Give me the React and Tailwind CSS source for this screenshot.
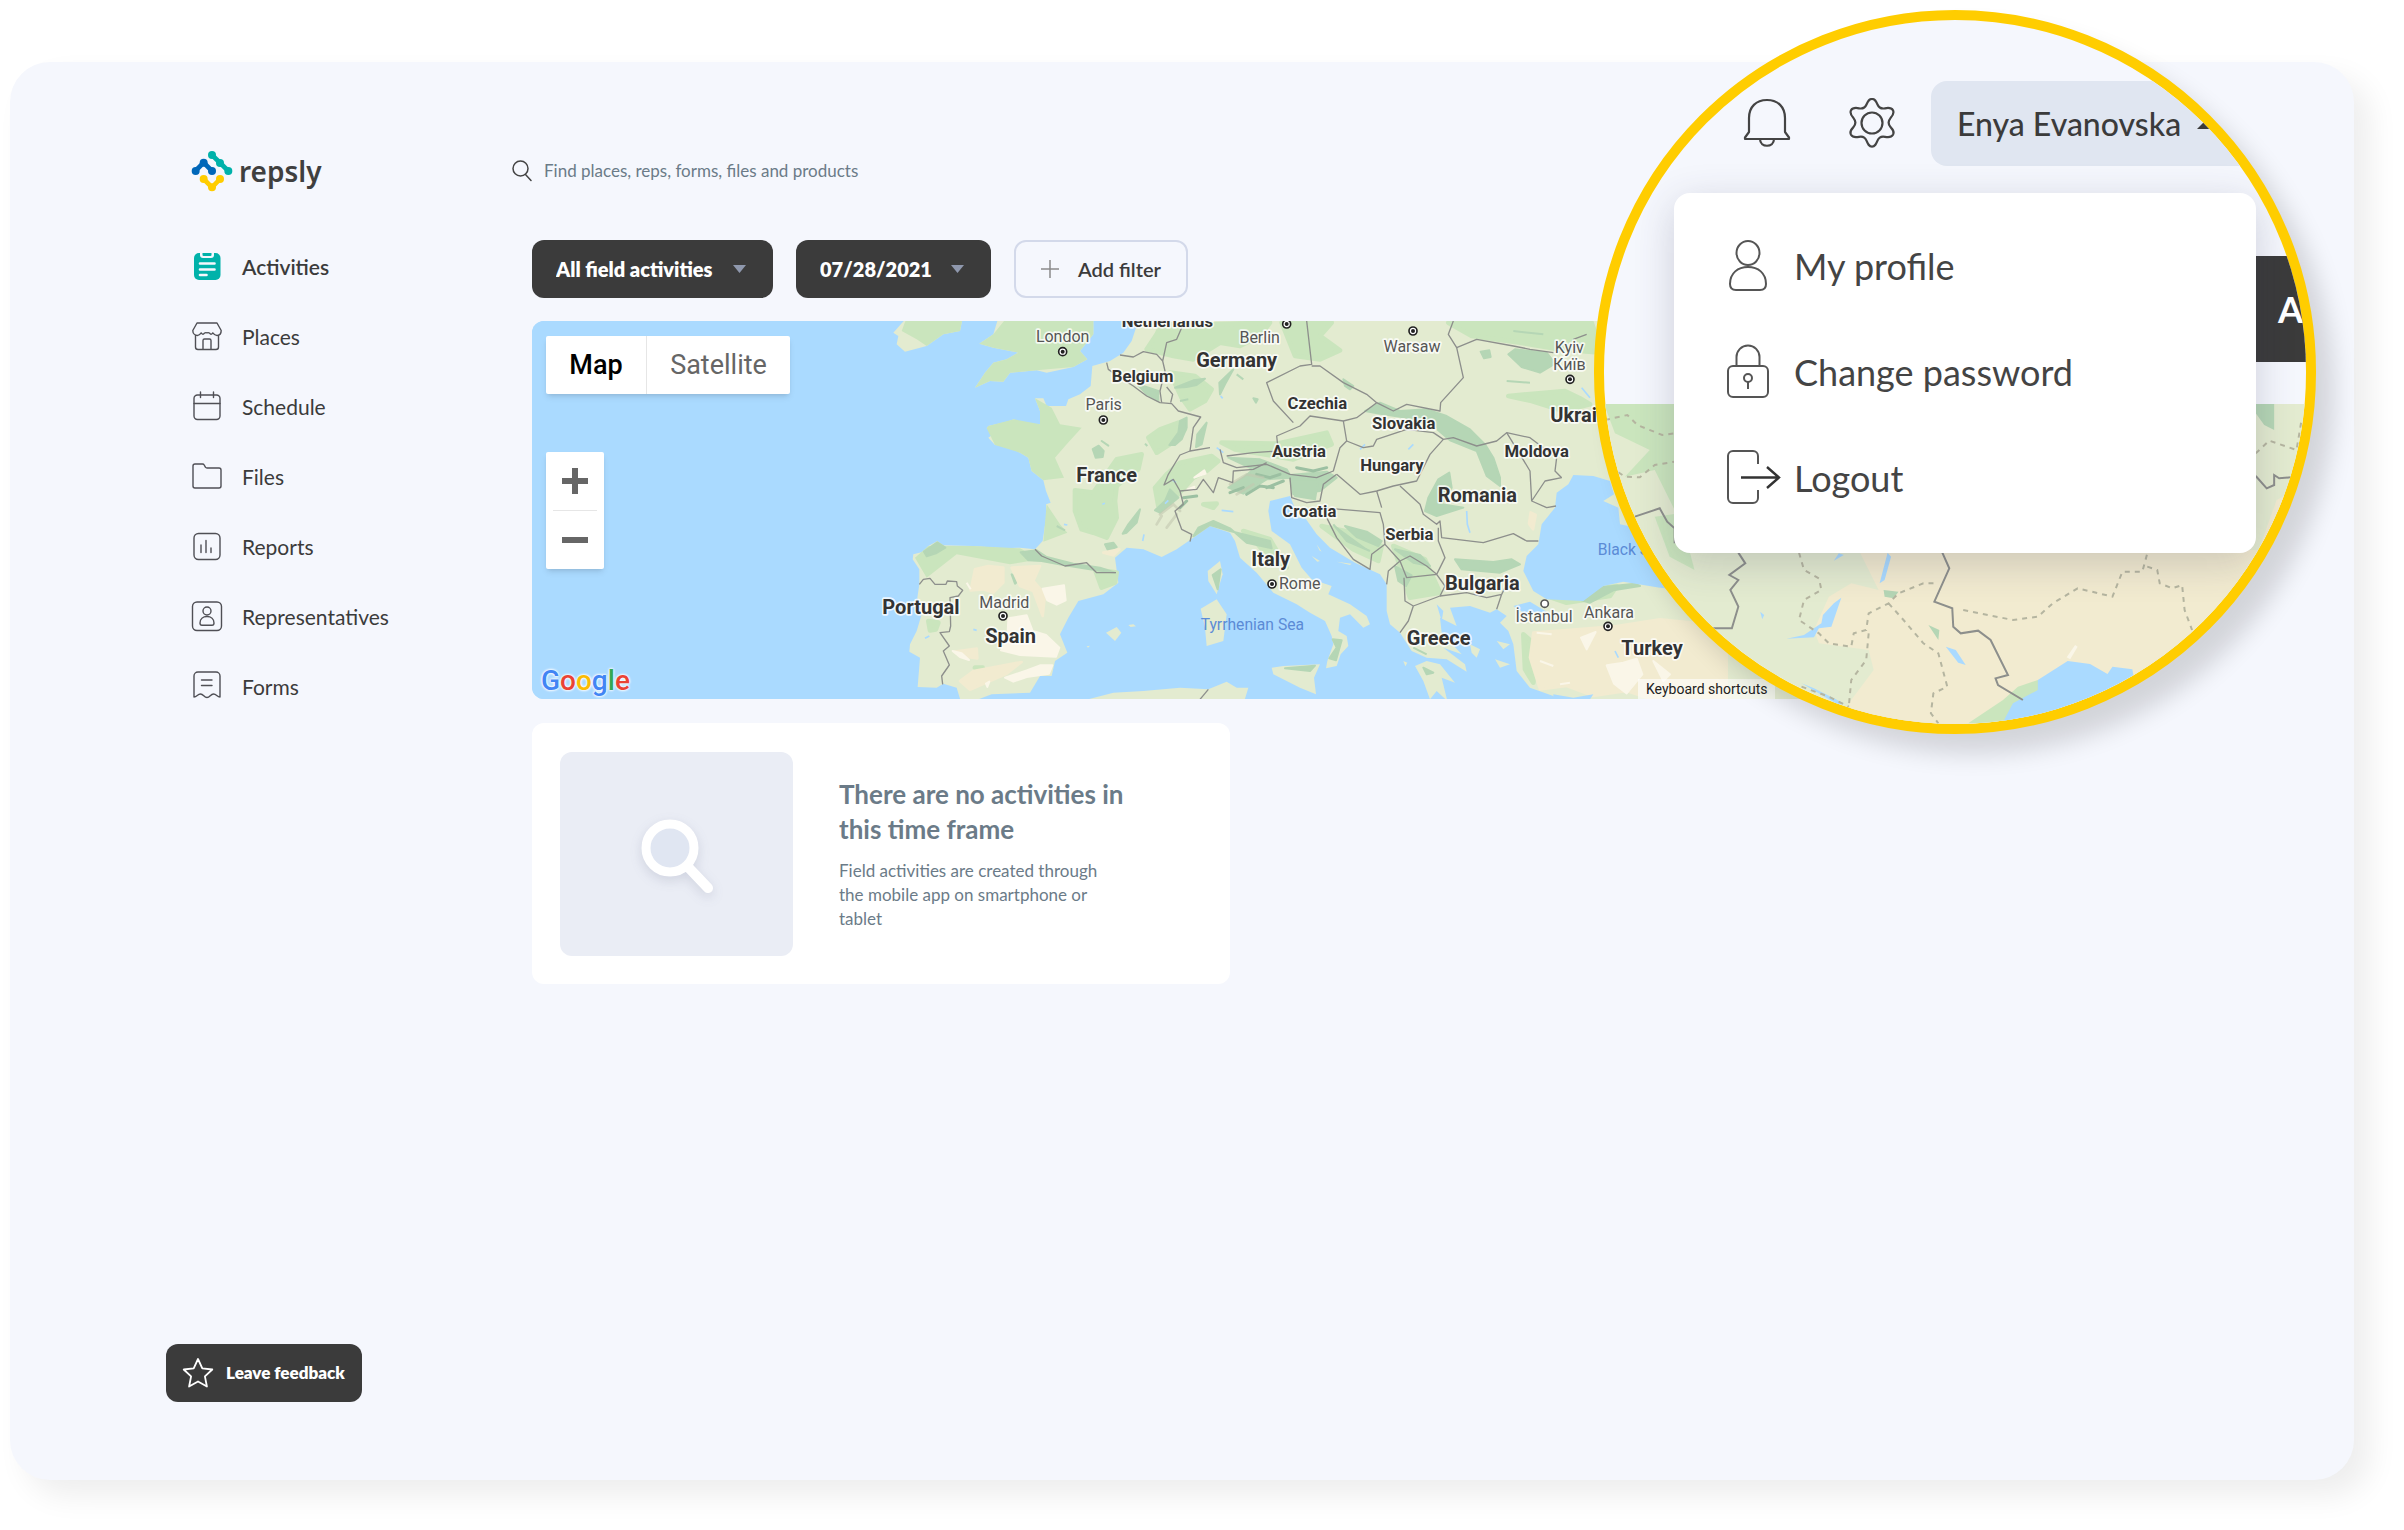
import React from "react";

const NAV_ITEMS = [
  { label: "Activities", icon: ActivitiesIcon, active: true },
  { label: "Places", icon: PlacesIcon },
  { label: "Schedule", icon: ScheduleIcon },
  { label: "Files", icon: FilesIcon },
  { label: "Reports", icon: ReportsIcon },
  { label: "Representatives", icon: RepresentativesIcon },
  { label: "Forms", icon: FormsIcon },
];

const COUNTRIES = [
  ["Netherlands", 922, 48, 50],
  ["Belgium", 848, 213, 50],
  ["Germany", 1130, 167, 60],
  ["France", 740, 512, 60],
  ["Portugal", 183, 909, 60],
  ["Spain", 452, 996, 60],
  ["Czechia", 1372, 293, 50],
  ["Slovakia", 1631, 355, 50],
  ["Moldova", 2030, 437, 50],
  ["Austria", 1317, 437, 50],
  ["Hungary", 1596, 481, 50],
  ["Romania", 1852, 573, 60],
  ["Croatia", 1348, 617, 50],
  ["Serbia", 1648, 686, 50],
  ["Italy", 1232, 765, 60],
  ["Bulgaria", 1867, 836, 60],
  ["Greece", 1736, 1002, 60],
  ["Ukraine", 2174, 334, 60],
  ["Turkey", 2376, 1032, 60],
];

const CITIES = [
  ["London", 608, 94, 608, 122],
  ["Paris", 731, 298, 730, 327],
  ["Madrid", 433, 892, 429, 915],
  ["Berlin", 1199, 97, 1280, 39],
  ["Warsaw", 1656, 123, 1659, 60],
  ["Київ", 2128, 176, 2130, 205],
  ["Rome", 1319, 835, 1236, 819],
  ["Ankara", 2247, 921, 2244, 946],
];

function NavIcon({ children }) {
  return (
    <svg
      viewBox="-16 -16 32 32"
      className="w-8 h-8 shrink-0"
      fill="none"
      stroke="#4f4f55"
      strokeWidth="1.4"
      strokeLinecap="round"
      strokeLinejoin="round"
      aria-hidden="true"
    >
      {children}
    </svg>
  );
}

function ActivitiesIcon() {
  return (
    <NavIcon>
      <rect x="-13" y="-14" width="26.5" height="27" rx="5" fill="#00b2aa" stroke="none" />
      <path d="M-7 -14.5v2.5a3 3 0 0 0 3 3h8a3 3 0 0 0 3 -3v-2.500z" fill="#f5f7fd" stroke="none" />
      <path d="M-4.500 -14h9v2a1 1 0 0 1 -1 1h-7a1 1 0 0 1 -1 -1z" fill="#00b2aa" stroke="none" />
      <path d="M-7 -3.500h14.500M-7 2.500h14.500M-7 8h6.500" stroke="#f5f7fd" strokeWidth="2.600" />
    </NavIcon>
  );
}

function PlacesIcon() {
  return (
    <NavIcon>
      <path d="M-10 -14h20l4.200 7.500c0 3 -1.700 5 -4.200 5c-2 0 -3 -1 -4.200 -2.600c-1 1.600 -1.800 1.600 -2.900 0.600c-0.900 -0.800 -1.400 -1.400 -2.900 -0.600c-1.500 -0.800 -2 -0.200 -2.900 0.600c-1.100 1 -1.900 1 -2.900 -0.600c-1.200 1.600 -2.200 2.600 -3.700 2.600c-2.500 0 -4.700 -2 -4.700 -5z" />
      <path d="M-11.500 -1.500v11.500a2.500 2.500 0 0 0 2.500 2.500h18a2.500 2.500 0 0 0 2.500 -2.500v-11.500M-4 12.500v-9a1.500 1.500 0 0 1 1.500 -1.500h5a1.500 1.500 0 0 1 1.500 1.500v9" />
    </NavIcon>
  );
}

function ScheduleIcon() {
  return (
    <NavIcon>
      <rect x="-13" y="-12" width="26" height="24.500" rx="3.500" />
      <path d="M-13 -3.500h26M-6.500 -15v5.500M6.500 -15v5.500" />
    </NavIcon>
  );
}

function FilesIcon() {
  return (
    <NavIcon>
      <path d="M-14 -11a2 2 0 0 1 2 -2h7.500a2 2 0 0 1 1.700 1l1.200 2.200a2 2 0 0 0 1.700 0.800h11.900a2 2 0 0 1 2 2v16a2 2 0 0 1 -2 2h-24a2 2 0 0 1 -2 -2z" />
    </NavIcon>
  );
}

function ReportsIcon() {
  return (
    <NavIcon>
      <rect x="-13" y="-13.500" width="26" height="26" rx="4.500" />
      <path d="M-6 -2v7.500M-1 -6.500v12M4 1v4.500" />
    </NavIcon>
  );
}

function RepresentativesIcon() {
  return (
    <NavIcon>
      <rect x="-14.500" y="-15" width="29" height="28.500" rx="4.500" />
      <circle cx="0" cy="-6" r="4" />
      <path d="M-7 6c0 -4 3 -6.500 7 -6.500s7 2.500 7 6.500c0 1.500 -0.800 2.200 -2 2.200h-10c-1.200 0 -2 -0.700 -2 -2.200z" />
    </NavIcon>
  );
}

function FormsIcon() {
  return (
    <NavIcon>
      <path d="M-13 10v-21a4 4 0 0 1 4 -4h18a4 4 0 0 1 4 4v21c-3 0 -3.500 -3 -6.500 -3s-3.500 3.500 -6.500 3.500s-3.500 -3.500 -6.500 -3.500s-3.500 3 -6.500 3z" />
      <path d="M-5.500 -7h10.500M-5.500 -1.500h10.500" />
    </NavIcon>
  );
}

function Logo() {
  return (
    <a href="#" className="flex items-center gap-1.5 w-fit" aria-label="repsly">
      <svg viewBox="122 90 126 126" className="w-[42px] h-[42px]" aria-hidden="true">
        <g strokeWidth="14" fill="none">
          <path d="M185 105L234 153" stroke="#00b2aa" />
          <path d="M135 153L160 128L185 153" stroke="#0067b9" />
          <path d="M160 177L185 202L209 177" stroke="#ffcd00" />
        </g>
        <g fill="#00b2aa">
          <circle cx="185" cy="105" r="12" />
          <circle cx="209" cy="129" r="12" />
          <circle cx="234" cy="153" r="12" />
        </g>
        <g fill="#0067b9">
          <circle cx="136" cy="153" r="12" />
          <circle cx="160" cy="128" r="12" />
          <circle cx="185" cy="153" r="12" />
        </g>
        <g fill="#ffcd00">
          <circle cx="160" cy="177" r="12" />
          <circle cx="185" cy="202" r="12" />
          <circle cx="209" cy="177" r="12" />
        </g>
      </svg>
      <span className="font-['Noto_Sans',sans-serif] font-semibold text-[28px] leading-10 text-[#3f3f3f]">
        repsly
      </span>
    </a>
  );
}

function Sidebar() {
  return (
    <aside className="w-[522px] shrink-0 flex flex-col pt-[88px] pb-[78px]">
      <div className="pl-[181px]">
        <Logo />
        <nav className="mt-10">
          <ul>
            {NAV_ITEMS.map(({ label, icon: Icon, active }) => (
              <li key={label}>
                <a href="#" className="h-[70px] flex items-center gap-[19px] text-[21px] text-[#3b3b3b]">
                  <Icon />
                  <span className={active ? "font-semibold" : ""}>{label}</span>
                </a>
              </li>
            ))}
          </ul>
        </nav>
      </div>
      <button className="mt-auto ml-[156px] w-[196px] h-[58px] rounded-xl bg-[#3b3b3b] text-white flex items-center gap-3 pl-4">
        <svg viewBox="0 0 32 32" className="w-8 h-8" fill="none" stroke="white" strokeWidth="1.800" strokeLinejoin="round" aria-hidden="true">
          <path d="M16 2l4.300 9.300l10 1.200l-7.400 6.900l2 10.100l-8.900 -5l-8.900 5l2 -10.100l-7.400 -6.900l10 -1.200z" />
        </svg>
        <span className="text-[17px] font-extrabold">Leave feedback</span>
      </button>
    </aside>
  );
}

function Caret() {
  return (
    <svg viewBox="0 0 13 8" className="w-[13px] h-2 absolute right-[27px] top-[25px] pointer-events-none" aria-hidden="true">
      <path d="M0 0h13l-6.500 8z" fill="#8f98ad" />
    </svg>
  );
}

function FilterSelect({ label, value, className }) {
  return (
    <div className="relative">
      <select
        aria-label={label}
        className={`appearance-none h-[58px] rounded-xl bg-[#3b3b3b] text-white text-xl font-extrabold pl-6 ${className}`}
      >
        <option>{value}</option>
      </select>
      <Caret />
    </div>
  );
}

function EuropeMap() {
  return (
    <svg
      viewBox="-984 30 4704 1134"
      preserveAspectRatio="xMinYMin slice"
      className="block w-[1568px] h-[378px] max-w-none font-[Roboto,sans-serif]"
      role="img"
      aria-label="Map of Europe"
    >
      <rect x="-984" y="30" width="4704" height="1134" fill="#aadaff" />
      {/* land */}
      <g fill="#e3ebd0">
        <path d="M838 20L815 90L790 125L750 150L697 165L692 225L660 250L625 265L618 285L560 285L550 262L525 262L540 300L540 340L490 345L462 325L440 332L385 345L380 352L405 365L385 380L405 402L440 405L480 425L505 440L515 480L550 508L558 540L572 575L558 580L560 610L548 690L525 715L480 710L430 712L340 705L250 703L232 690L205 705L190 722L160 730L158 745L178 775L178 820L172 860L185 910L170 960L150 1000L148 1022L180 1040L173 1128L230 1130L250 1118L290 1130L305 1180L355 1165L395 1150L510 1145L540 1095L575 1095L585 1050L622 1025L600 970L625 920L655 870L730 850L775 815L765 740L800 710L850 715L905 738L950 715L1000 680L1050 645L1110 665L1125 690L1140 740L1190 785L1240 845L1310 880L1350 905L1395 930L1415 975L1420 1000L1402 1050L1398 1072L1430 1065L1442 1030L1465 1005L1460 975L1435 960L1440 920L1470 910L1510 950L1530 940L1520 915L1470 880L1405 850L1415 825L1355 805L1325 770L1290 700L1235 660L1225 600L1230 570L1290 555L1300 580L1315 620L1335 620L1370 670L1410 710L1485 755L1560 790L1580 820L1580 900L1590 940L1620 965L1655 1020L1700 1040L1760 1045L1820 1082L1815 1060L1750 1010L1805 1030L1745 965L1740 920L1790 945L1770 890L1830 885L1890 905L1910 895L1940 915L1920 935L1945 960L1960 1000L1970 1080L2010 1130L2080 1155L2100 1190L3720 1190L3720 20Z" />
        <path d="M140 20L100 65L115 75L110 100L135 122L200 105L250 70L300 60L308 20Z" />
        <path d="M415 20L400 70L358 98L400 110L475 125L440 145L400 155L375 185L345 230L390 210L430 212L450 185L530 178L560 185L640 168L682 145L660 120L700 70L700 20Z" />
        <path d="M1665 1065L1700 1050L1740 1060L1785 1115L1745 1100L1762 1170L1730 1140L1710 1165L1690 1110Z" />
        <path d="M1235 1070L1270 1065L1380 1060L1362 1100L1368 1150L1320 1130L1240 1090Z" />
        <path d="M1022 893L1070 865L1100 910L1090 990L1040 1005L1035 950Z" />
        <path d="M1043 780L1080 750L1088 790L1070 850L1045 810Z" />
        <path d="M738 965L770 948L784 965L765 990Z" />
        <path d="M805 942L820 940L828 946L812 948ZM680 1006L690 1004L684 1010Z" />
        <path d="M665 1170L760 1145L850 1140L960 1130L1045 1135L1100 1112L1130 1130L1165 1130L1150 1180Z" />
        <path d="M1830 1000L1860 1015L1850 1040L1835 1025ZM1910 990L1950 1000L1930 1015ZM1905 1045L1950 1060L1920 1070Z" />
        <path d="M1630 1050L1642 1055L1636 1066ZM1355 735L1380 750L1372 752ZM1430 752L1475 758L1470 762ZM1370 700L1385 722L1378 718Z" />
      </g>
      {/* light green lowlands and woods */}
      <g fill="#cae5bd">
        <path d="M140 20L125 60L170 85L200 105L250 70L300 60L308 20Z" />
        <path d="M440 20L400 70L358 98L400 110L475 125L440 145L400 155L375 185L345 230L390 210L430 212L450 185L530 178L640 168L682 145L660 120L700 70L700 20Z" />
        <path d="M525 262L540 300L540 340L462 325L385 345L380 352L405 402L480 425L505 440L515 480L550 508L612 500L585 440L620 400L665 350L600 340L575 290Z" />
        <path d="M560 580L600 640L622 665L550 692Z" />
        <path d="M205 705L340 705L480 712L540 745L450 760L290 730L200 800L165 740Z" />
      </g>
      <g fill="#cae5bd" stroke="#cae5bd" strokeWidth="14" strokeLinejoin="round">
        <path d="M645 538L700 545L735 495L770 445L845 430L835 475L800 500L770 525L765 570L770 620L740 680L700 665L665 655L645 600Z" />
        <path d="M905 35L1050 40L1230 35L1200 75L1140 105L1080 95L1040 120L1000 145L940 135L860 115L890 70Z" />
        <path d="M930 185L1005 195L1055 235L1035 270L990 295L965 260Z" />
        <path d="M865 380L900 355L955 335L975 355L945 390L890 425Z" />
        <path d="M885 530L920 490L960 455L1055 435L1075 450L1040 480L1000 500L950 555L895 585Z" />
        <path d="M705 775L770 785L765 815L725 830Z" />
        <path d="M1085 395L1250 398L1400 365L1415 400L1300 445L1125 415Z" />
        <path d="M1265 35L1415 35L1380 75L1440 118L1380 145L1305 135Z" />
        <path d="M1765 35L2195 35L2225 125L2100 115L1980 95L1835 75Z" />
        <path d="M1945 255L2115 240L2160 262L2190 280L2110 300L2015 270Z" />
        <path d="M1385 645L1480 665L1565 705L1555 750L1480 715Z" />
        <path d="M1600 705L1695 745L1740 845L1650 860Z" />
        <path d="M1150 660L1230 685L1280 770L1240 755L1185 690Z" />
        <path d="M2060 855L2200 835L2270 825L2250 855L2120 875Z" />
        <path d="M1990 970L2030 1005L2020 1115L1995 1075Z" />
        <path d="M205 930L235 935L228 955L210 958ZM345 1070L368 1070L360 1078ZM1030 580L1070 578L1060 590Z" />
      </g>
      {/* hills and mountains */}
      <g fill="#b5d6b5" stroke="#b5d6b5" strokeWidth="6" strokeLinejoin="round">
        <path d="M698 414L716 404L731 420L728 438L707 440Z" />
        <path d="M725 390L745 404Z" />
        <path d="M840 595L830 635L800 665L788 668L805 640Z" />
        <path d="M980 320L980 350L965 385L945 402L928 402L955 365L960 330Z" />
        <path d="M1040 335L1025 400L1008 408L1012 370Z" />
        <path d="M1120 175L1095 220L1080 250L1078 215Z" />
        <path d="M945 230L1000 208L1035 203L1010 222L980 228ZM960 270L985 265M1180 262L1193 265L1188 275ZM1130 190L1150 205" />
        <path d="M830 218L895 240L895 270L862 252Z" />
        <path d="M530 718L560 738L640 758L720 770L765 785L690 775L610 762L545 750L505 748L482 724Z" />
        <path d="M192 722L232 694L256 710L230 726L200 736Z" />
        <path d="M455 790L485 802L465 818Z" />
        <path d="M1000 676L1050 642L1110 660L1230 690L1235 712L1160 695L1110 652L1060 630L1015 650Z" />
        <path d="M1105 440L1200 445L1280 475L1290 492L1400 482L1430 500L1380 540L1300 550L1290 500L1220 505L1150 548L1105 530L1150 500L1180 475Z" />
        <path d="M1295 505L1375 505L1365 565L1305 555Z" />
        <path d="M1515 300L1560 275L1620 300L1700 295L1760 315L1830 355L1875 400L1900 440L1920 500L1920 525L1880 495L1850 420L1770 388L1720 345L1640 320L1560 308Z" />
        <path d="M1735 505L1768 485L1775 530L1745 580L1810 590L1730 615L1695 600L1705 560Z" />
        <path d="M1965 115L2060 125L2085 158L2040 185L1985 168L1945 130Z" />
        <path d="M1862 122L1888 118L1892 138L1872 142ZM1960 60L2050 70M1940 210L2010 215" />
        <path d="M1785 745L1900 753L1955 745L1980 760L1920 785L1805 775Z" />
        <path d="M1455 645L1520 662L1565 690L1555 705L1490 678ZM1420 640L1460 690L1530 720" />
        <path d="M1605 715L1680 732L1710 765L1660 755Z" />
        <path d="M1605 765L1655 793L1638 825L1615 810Z" />
        <path d="M1418 985L1445 988L1428 1048L1408 1042L1430 1010Z" />
        <path d="M1275 1072L1365 1064L1350 1080ZM1690 1070L1720 1085L1700 1090ZM1660 1010L1700 1030" />
        <path d="M2165 868L2230 828L2325 818L2340 825L2260 838L2190 875Z" />
        <path d="M1058 792L1082 775L1073 835Z" />
        <path d="M1450 205L1480 225L1470 235L1455 225Z" />
        <path d="M930 535L955 560L900 605L885 598L915 570Z" />
        <path d="M735 700L760 695L770 708L745 720ZM855 398L862 405M590 645L615 658" />
      </g>
      <path
        d="M1110 545L1150 530M1160 550L1200 525L1240 530M1190 490L1230 500L1260 490M1220 530L1270 510M1310 470L1360 480L1400 470M970 560L1010 555M960 590L980 570"
        fill="none"
        stroke="#9cc0a2"
        strokeWidth="9"
        strokeLinecap="round"
      />
      {/* dry plateaus */}
      <g fill="#f2ebd0" stroke="#f2ebd0" strokeWidth="8" strokeLinejoin="round">
        <path d="M345 775L385 765L430 770L430 815L400 845L370 835L332 838Z" />
        <path d="M455 770L540 765L520 810L555 850L548 915L520 840L480 825Z" />
        <path d="M300 1110L340 1080L380 1073L485 1053L440 1088L330 1136Z" />
        <path d="M285 1022L350 1013L352 1042L300 1035Z" />
        <path d="M730 725L778 715L760 733Z" />
        <path d="M2020 965L2150 955L2270 945L2400 925L2600 945L2600 1180L2420 1180L2300 1140L2200 1155L2120 1125L2040 1135L2010 1040Z" />
        <path d="M2012 604L2027 612L2019 655L2007 638Z" />
      </g>
      <g fill="#faf6e8" stroke="#faf6e8" strokeWidth="6" strokeLinejoin="round">
        <path d="M548 833L612 823L617 868L590 881L562 868Z" />
        <path d="M445 922L500 913L518 960L558 972L598 1010L588 1037L480 1032L423 1018L442 990Z" />
        <path d="M435 1100L500 1078L540 1063L577 1063L567 1088L500 1098L460 1112ZM378 1118L388 1112L382 1128ZM320 815L332 835" />
        <path d="M278 1020L305 1027L327 1047L300 1038Z" />
        <path d="M2240 1063L2290 1055L2330 1043L2347 1090L2300 1147L2262 1118ZM2380 1050L2430 1090L2410 1110Z" />
        <path d="M2163 980L2207 963L2180 1015ZM2030 965L2075 970M2040 1050L2080 1065M2100 1120L2130 1115" />
        <path d="M1003 500L1033 478L1037 488ZM983 535L1003 527L1000 537Z" />
      </g>
      <g fill="none" stroke="#c3c8b0" strokeWidth="8" strokeLinecap="round" opacity="0.600">
        <path d="M900 610L940 580L960 600M920 650L950 610M1110 520L1160 490L1210 500M1130 550L1180 520M890 640L905 615" />
      </g>
      {/* inland seas and lakes */}
      <g fill="#aadaff">
        <path d="M2250 510L2200 495L2140 492L2125 520L2090 545L2085 590L2045 640L2035 700L2000 735L1990 780L2020 840L2060 865L2170 870L2230 825L2290 812L2400 830L2560 850L2560 700L2280 640L2275 590L2230 570L2262 550Z" />
        <path d="M1960 885L2010 872L2040 890L2060 902L1990 905Z" />
        <path d="M1730 880L1750 900L1745 930ZM2080 1150L2140 1160L2200 1150L2180 1180L2080 1180Z" />
      </g>
      <path
        d="M1820 600L1822 640L1830 665M1500 415L1515 400M1645 415L1660 400M915 578L925 568M2165 230L2190 260M1082 255L1088 262M1085 598L1120 602M848 690L852 670M727 580L735 577M612 640L622 642M195 982L208 975M340 955L350 958M2265 1020L2275 1040M1070 410L1090 425M935 505L948 515"
        stroke="#aadaff"
        strokeWidth="5"
        fill="none"
      />
      {/* borders */}
      <g fill="none" stroke="#8d8f8c" strokeWidth="4" strokeLinejoin="round">
        <path d="M178 820L190 805L210 802L225 820L258 820L262 810L290 812L292 825L308 838L295 855L270 860L272 945L268 962L240 965L268 1005L250 1020L268 1062L245 1095L248 1120" />
        <path d="M525 715L545 735L615 765L680 755L710 785L768 785" />
        <path d="M740 155L745 175L780 200L820 225L860 255L900 275L935 278L955 300L1022 318L1000 350L990 420L1050 410" />
        <path d="M780 132L820 138L850 122L890 130L908 150L915 180L900 240L905 275M908 150L920 95L950 85L965 50M920 228L938 250L932 275" />
        <path d="M990 420L960 432L925 490L912 522L940 505L960 540L1010 535L1030 505L1060 545L1075 500L1118 515L1120 480L1180 475L1220 455" />
        <path d="M960 540L970 580L945 600L965 655L995 670L990 692" />
        <path d="M1080 415L1090 455L1130 470L1220 460L1290 490L1370 500L1420 480L1440 410L1460 390L1450 330L1370 318L1350 315L1320 345L1250 375L1255 420L1180 425L1100 435" />
        <path d="M1340 30L1355 160L1320 165L1220 215L1240 270L1300 335M1355 165L1380 165L1450 215L1520 250L1550 275L1490 320L1450 330" />
        <path d="M1550 275L1600 300L1640 280L1740 300L1742 275L1810 200L1790 110L1765 70L1780 30" />
        <path d="M1460 390L1510 410L1540 405L1550 385L1640 355L1720 365L1750 385L1780 380L1850 405L1910 390L1940 365L2010 380L2090 440L2085 480L2105 500" />
        <path d="M1750 385L1710 430L1670 510L1600 525L1550 540L1500 550L1430 490M1620 525L1680 580L1690 610L1730 640L1740 630L1745 680L1870 695L1960 668L2000 690L2035 690" />
        <path d="M1940 365L1980 430L2010 480L2015 570L2060 590L2088 585M2015 570L2055 510L2105 500" />
        <path d="M1430 490L1390 520L1380 570L1340 575L1295 560L1290 500" />
        <path d="M1380 590L1560 605L1570 640L1575 700L1535 730L1530 775L1480 745L1430 680L1400 620M1550 540L1565 590" />
        <path d="M1575 700L1620 750L1585 780L1580 820M1620 750L1650 735L1700 765L1730 790L1755 740L1735 690L1735 650M1620 750L1640 800L1730 790L1755 825L1740 855L1660 885L1635 870L1632 800M1660 885L1645 930L1620 965" />
        <path d="M1740 855L1820 845L1880 860L1925 850L1935 830M1925 850L1910 895" />
        <path d="M1790 110L1850 85L1960 105L2010 115L2080 125M2180 70L2140 85" />
        <path d="M1045 1135L1020 1165" />
      </g>
      {/* capitals */}
      {CITIES.map(([name, , , x, y]) => (
        <g key={name}>
          <circle cx={x} cy={y} r="12" fill="white" stroke="#222" strokeWidth="5" />
          <circle cx={x} cy={y} r="6" fill="#222" />
        </g>
      ))}
      <circle cx="2054" cy="878" r="11" fill="white" stroke="#555" strokeWidth="5" />
      <g textAnchor="middle" stroke="white" strokeWidth="10" strokeLinejoin="round" paintOrder="stroke" strokeOpacity="0.800">
        {COUNTRIES.map(([name, x, y, size]) => (
          <text key={name} x={x} y={y} fontSize={size} fontWeight="700" fill="#333">
            {name}
          </text>
        ))}
        {CITIES.map(([name, x, y]) => (
          <text key={name} x={x} y={y} fontSize="48" fill="#555">
            {name}
          </text>
        ))}
        <text x="2128" y="127" fontSize="48" fill="#555">Kyiv</text>
        <text x="2052" y="934" fontSize="48" fill="#555">İstanbul</text>
      </g>
      <g fontSize="47" fill="#5b8bd6">
        <text x="1022" y="956">Tyrrhenian Sea</text>
        <text x="2213" y="733">Black Sea</text>
      </g>
    </svg>
  );
}

function MapPanel() {
  return (
    <section className="relative h-[378px] mr-[254px] rounded-xl overflow-hidden bg-[#aadaff]">
      <EuropeMap />
      <div className="absolute left-[14px] top-[15px] h-[58px] flex bg-white rounded-xs shadow-md font-[Roboto,sans-serif] text-[27px]">
        <button className="w-[101px] font-medium text-black border-r border-[#e6e6e6]">Map</button>
        <button className="w-[143px] text-[#666]">Satellite</button>
      </div>
      <div className="absolute left-[14px] top-[131px] w-[58px] flex flex-col items-center bg-white rounded-xs shadow-md">
        <button aria-label="Zoom in" className="h-[58px] flex items-center">
          <svg viewBox="0 0 26 26" className="w-[26px] h-[26px]" aria-hidden="true">
            <path d="M13 0v26M0 13h26" stroke="#666" strokeWidth="6" />
          </svg>
        </button>
        <span className="w-11 h-px bg-[#e6e6e6]" />
        <button aria-label="Zoom out" className="h-[58px] flex items-center">
          <svg viewBox="0 0 26 26" className="w-[26px] h-[26px]" aria-hidden="true">
            <path d="M0 13h26" stroke="#666" strokeWidth="6" />
          </svg>
        </button>
      </div>
      <a
        href="#"
        className="absolute left-[9px] bottom-0 font-[Roboto,sans-serif] font-medium text-[28px] leading-9 [text-shadow:0_0_3px_white,0_0_3px_white,0_0_2px_white]"
      >
        <span className="text-[#4285f4]">G</span>
        <span className="text-[#ea4335]">o</span>
        <span className="text-[#fbbc05]">o</span>
        <span className="text-[#4285f4]">g</span>
        <span className="text-[#34a853]">l</span>
        <span className="text-[#ea4335]">e</span>
      </a>
      <button className="absolute left-[1106px] bottom-0 h-5 px-2 bg-white/60 font-[Roboto,sans-serif] text-[14px] leading-5 text-[#222]">
        Keyboard shortcuts
      </button>
    </section>
  );
}

function EmptyState() {
  return (
    <section className="mt-6 w-[698px] h-[261px] rounded-xl bg-white flex items-center gap-[46px] pl-7">
      <div className="w-[233px] h-[204px] rounded-xl bg-[#eaedf5] flex items-center justify-center">
        <svg viewBox="0 0 80 80" className="w-20 h-20 drop-shadow-[0_4px_6px_rgba(60,70,110,0.15)]" fill="none" aria-hidden="true">
          <path d="M52 54L71 74" stroke="white" strokeWidth="10" strokeLinecap="round" />
          <circle cx="33" cy="34" r="24" fill="#e0e6f2" stroke="white" strokeWidth="9" />
        </svg>
      </div>
      <div className="text-[#6b7b88]">
        <h2 className="w-[310px] text-[26px] leading-[35px] font-bold">There are no activities in this time frame</h2>
        <p className="mt-3 w-[280px] text-[17px] leading-6">
          Field activities are created through the mobile app on smartphone or tablet
        </p>
      </div>
    </section>
  );
}

function BackdropMap() {
  return (
    <svg viewBox="48 102 1411 960" preserveAspectRatio="none" className="absolute inset-x-0 bottom-0 w-full h-[320px]" aria-hidden="true">
      <rect x="0" y="100" width="1568" height="1000" fill="#e3ebd0" />
      <path d="M48 102H190V420L150 300L90 320L140 240L70 190Z" fill="#cae5bd" />
      <path d="M150 440L200 430L230 600L180 560Z" fill="#cae5bd" />
      <path d="M560 540L1568 540V1100H560L540 1000L590 900L580 840L480 820L470 780L500 680L545 640L600 660Z" fill="#f2ebd0" />
      <path d="M1400 390L1568 250V640H1340Z" fill="#f2ebd0" />
      <path d="M780 1060L850 990L880 950L920 930L930 980L860 1060Z" fill="#cae5bd" />
      <path d="M1358 102H1395V180L1375 165L1358 130ZM700 765L722 780L720 810ZM610 660L640 665L630 685L612 680Z" fill="#b5d6b5" />
      <path d="M525 683L505 770L480 775L470 802L415 806L450 795L485 760L488 735L510 700ZM618 548L625 560L612 630L602 640ZM520 550L530 555L510 572ZM735 830L755 840L775 885L760 878ZM845 1070L870 1000L920 960L920 930L980 873L1025 882L1060 912L1070 890L1110 898L1130 1070ZM445 940L470 955L530 1000L520 1005ZM362 725L370 735L366 748Z" fill="#aadaff" />
      <path d="M995 825L1000 830L985 868L978 862Z" fill="#faf6e8" />
      <g fill="none" stroke="#8d8f8c" strokeWidth="2">
        <path vectorEffect="non-scaling-stroke" d="M110 440L160 415L175 455L190 475V520M318 548L332 580L300 615L318 630L302 660L318 710L305 775H260M728 548L742 595L712 695L748 715L750 770L765 790L800 782L825 810L860 915L835 925L840 945L890 990M1358 318L1380 355L1395 345V315L1405 325L1440 320" />
        <path
          vectorEffect="non-scaling-stroke"
          strokeDasharray="5 5"
          stroke="#b5b5a0"
          d="M50 150L95 135L115 165L165 195L190 190M60 290L90 320L120 322L150 285L190 275M440 548L450 600L480 625L485 660L450 690L440 750L480 790L500 820L545 830L550 790L575 780L580 730L620 700L640 670L690 640L715 640M620 700L650 750L690 820L720 850L738 950L710 970L705 1030L720 1060M770 720L870 750L920 740L950 700L1000 655L1070 680L1090 605L1130 605L1140 550M1140 590L1160 600L1165 640L1190 655L1210 645L1215 720L1230 780M580 790L575 870L545 930L540 1010M445 950L500 980L540 1010M1358 250L1385 212L1420 230L1440 240L1450 150"
        />
      </g>
    </svg>
  );
}

const MENU_ITEMS = [
  {
    label: "My profile",
    icon: (
      <>
        <ellipse cx="22" cy="15" rx="11.500" ry="12" />
        <path d="M4 46c0 -11 8 -17 18 -17s18 6 18 17c0 4 -2 6 -6 6h-24c-4 0 -6 -2 -6 -6z" />
      </>
    ),
  },
  {
    label: "Change password",
    icon: (
      <>
        <path d="M10.500 22v-9a11.500 11.500 0 0 1 23 0v9" />
        <rect x="2" y="22" width="40" height="31" rx="5" />
        <circle cx="22" cy="34" r="4" />
        <path d="M22 38v7" />
      </>
    ),
  },
  {
    label: "Logout",
    icon: (
      <>
        <path d="M32 14v-8a5 5 0 0 0 -5 -5h-20a5 5 0 0 0 -5 5v42a5 5 0 0 0 5 5h20a5 5 0 0 0 5 -5v-8" />
        <path d="M15 27.500h38M41 17l12 10.500l-12 10.500" stroke="#333" strokeWidth="2.400" />
      </>
    ),
  },
];

function AccountLens() {
  return (
    <div className="absolute left-[1594px] top-[10px] w-[722px] h-[724px] rounded-full border-10 border-[#ffcd00] bg-[#f5f7fd] overflow-hidden shadow-[18px_20px_24px_rgba(0,0,0,0.14)]">
      <BackdropMap />
      <div className="absolute right-0 top-[236px] w-[50px] h-[106px] bg-[#3b3b3b] text-white text-4xl font-bold pl-[22px] flex items-center">
        A
      </div>
      <div className="relative pt-[61px] pl-[138px] flex items-center">
        <button aria-label="Notifications">
          <svg viewBox="0 2 50 52" className="w-[50px] h-[52px]" fill="none" stroke="#444" strokeWidth="2.200" strokeLinejoin="round" aria-hidden="true">
            <path d="M7 36V22C7 11 14 4 25 4s18 7 18 18v14l4 5.500v1.500H3v-1.500z" />
            <path d="M18 43c0 9 14 9 14 0" />
          </svg>
        </button>
        <button aria-label="Settings" className="ml-[54px]">
          <svg viewBox="0 1 52 52" className="w-[52px] h-[52px]" fill="none" stroke="#444" strokeWidth="2.200" strokeLinejoin="round" aria-hidden="true">
            <circle cx="26" cy="26" r="10.500" />
            <path d="M26 2c3 0 4 2 5.500 5.500c1.500 3.500 4 4.500 7.500 3.800c4 -0.800 6.500 -0.500 8 2c1.500 3 0 5 -2.500 7.800c-2.500 3 -2.500 6 0 9c2.500 2.800 4 4.700 2.500 7.700c-1.500 2.500 -4 2.800 -8 2c-3.500 -0.700 -6 0.300 -7.500 3.800c-1.500 3.500 -2.500 6 -5.500 6s-4 -2.500 -5.500 -6c-1.500 -3.500 -4 -4.500 -7.500 -3.800c-4 0.800 -6.500 0.500 -8 -2c-1.500 -3 0 -4.900 2.500 -7.700c2.500 -3 2.500 -6 0 -9c-2.500 -2.800 -4 -4.800 -2.500 -7.800c1.500 -2.500 4 -2.800 8 -2c3.500 0.700 6 -0.300 7.500 -3.800c1.500 -3.500 2.500 -5.500 5.500 -5.500z" />
          </svg>
        </button>
        <button className="ml-[33px] h-[85px] w-[374px] shrink-0 rounded-2xl bg-[#e0e6f1] pl-[26px] flex items-center gap-4 text-[32px] font-medium text-[#3b3b3b]">
          Enya Evanovska
          <svg viewBox="0 0 20 10" className="w-5 h-[10px]" aria-hidden="true">
            <path d="M0 10h20l-10 -10z" fill="#3b3b3b" />
          </svg>
        </button>
      </div>
      <ul className="absolute left-[70px] top-[173px] w-[582px] h-[360px] pt-5 pl-[52px] rounded-2xl bg-white shadow-[0_10px_40px_rgba(50,50,80,0.2)]">
        {MENU_ITEMS.map(({ label, icon }) => (
          <li key={label}>
            <button className="h-[106px] flex items-center gap-3 text-4xl text-[#444]">
              <svg viewBox="0 0 56 56" className="w-14 h-14" fill="none" stroke="#555" strokeWidth="2" aria-hidden="true">
                {icon}
              </svg>
              {label}
            </button>
          </li>
        ))}
      </ul>
    </div>
  );
}

export default function App() {
  return (
    <div className="relative min-h-screen flex overflow-hidden bg-white pt-[62px] pr-[50px] pb-[50px] pl-[10px] font-[Lato,sans-serif]">
      <div className="flex-1 min-w-0 flex rounded-[40px] bg-[#f5f7fd] shadow-[16px_16px_30px_rgba(0,0,0,0.07)]">
        <Sidebar />
        <main className="flex-1 min-w-0 pt-[88px]">
          <label className="-ml-5 h-[42px] flex items-center gap-3">
            <svg viewBox="0 0 20 22" className="w-5 h-[22px]" fill="none" stroke="#444" strokeWidth="1.500" strokeLinecap="round" aria-hidden="true">
              <circle cx="8.500" cy="8.500" r="7.500" />
              <path d="M13.500 14.500l5.500 6" />
            </svg>
            <input
              type="search"
              aria-label="Search"
              placeholder="Find places, reps, forms, files and products"
              className="w-[400px] bg-transparent text-[17px] outline-none placeholder:text-[#6b7b88] placeholder:opacity-100"
            />
          </label>
          <div className="mt-12 mb-[23px] flex gap-[23px]">
            <FilterSelect label="Activity type" value="All field activities" className="w-[241px]" />
            <FilterSelect label="Date" value="07/28/2021" className="w-[195px]" />
            <button className="h-[58px] w-[174px] rounded-xl border-2 border-[#d3d9ea] flex items-center gap-[19px] pl-[25px] text-xl font-semibold text-[#3b3b3b]">
              <svg viewBox="0 0 18 18" className="w-[18px] h-[18px]" stroke="#8a8a8a" strokeWidth="1.500" aria-hidden="true">
                <path d="M9 0v18M0 9h18" />
              </svg>
              Add filter
            </button>
          </div>
          <MapPanel />
          <EmptyState />
        </main>
      </div>
      <AccountLens />
    </div>
  );
}
